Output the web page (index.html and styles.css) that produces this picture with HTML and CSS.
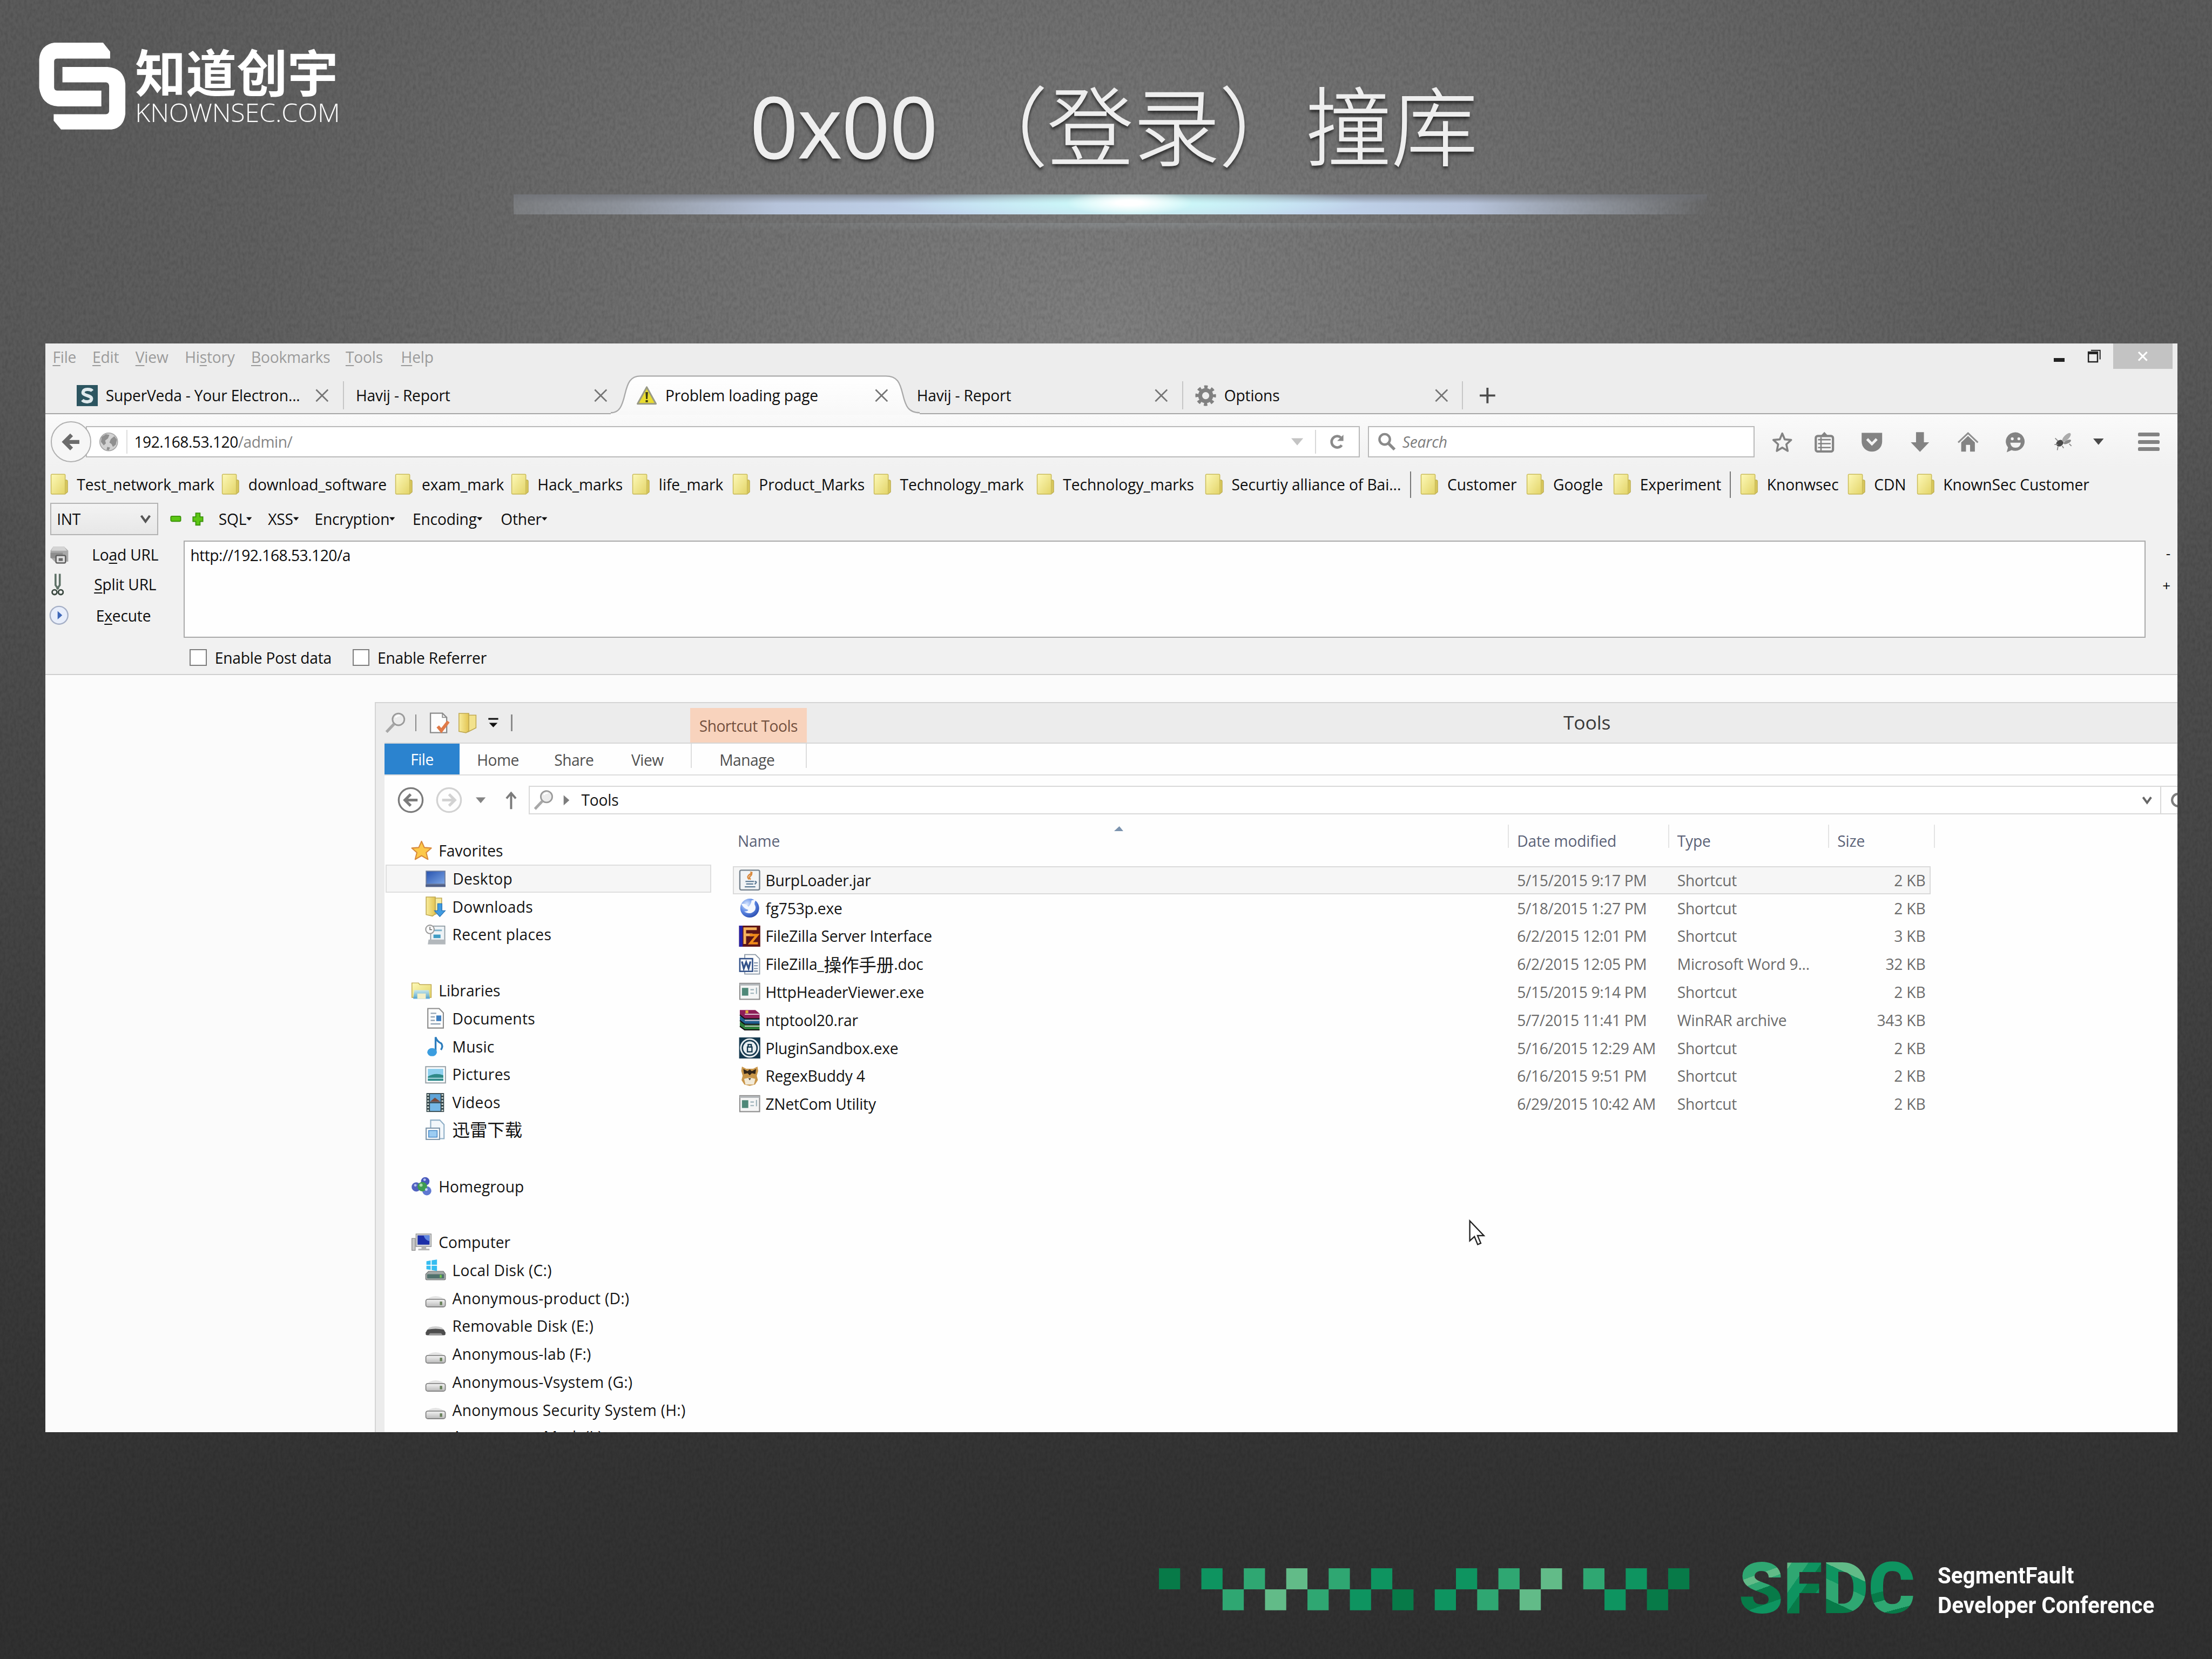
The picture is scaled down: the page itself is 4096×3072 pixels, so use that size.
FILE: index.html
```html
<!DOCTYPE html>
<html lang="zh-CN">
<head>
<meta charset="utf-8">
<title>0x00 （登录）撞库</title>
<link rel="stylesheet" href="styles.css">
</head>
<body>
<svg class="defs" aria-hidden="true">
  <defs>
    <linearGradient id="gFolder" x1="0" y1="0" x2="1" y2="1"><stop offset="0" stop-color="#fdf9b8"/><stop offset="1" stop-color="#e3d468"/></linearGradient>
    <linearGradient id="gFolder2" x1="0" y1="0" x2="1" y2="0"><stop offset="0" stop-color="#f8ec9c"/><stop offset="1" stop-color="#e2c452"/></linearGradient>
    <linearGradient id="gGrey" x1="0" y1="0" x2="0" y2="1"><stop offset="0" stop-color="#f4f4f4"/><stop offset="1" stop-color="#b9b9b9"/></linearGradient>
    <linearGradient id="gBlue" x1="0" y1="0" x2="1" y2="1"><stop offset="0" stop-color="#2a55b0"/><stop offset="1" stop-color="#7aa4e4"/></linearGradient>
    <linearGradient id="gSky" x1="0" y1="0" x2="0" y2="1"><stop offset="0" stop-color="#bfe6fb"/><stop offset="1" stop-color="#3d9bd8"/></linearGradient>
    <linearGradient id="gTab" x1="0" y1="0" x2="0" y2="1"><stop offset="0" stop-color="#ffffff"/><stop offset="1" stop-color="#f8f8f8"/></linearGradient>
    <radialGradient id="gGlobe" cx=".35" cy=".3" r=".8"><stop offset="0" stop-color="#dbe9ff"/><stop offset=".5" stop-color="#5f8be6"/><stop offset="1" stop-color="#2344a8"/></radialGradient>
    <filter id="grain" x="0" y="0" width="100%" height="100%">
      <feTurbulence type="fractalNoise" baseFrequency=".2 .12" numOctaves="2" seed="4"/>
      <feColorMatrix values="0 0 0 0 0  0 0 0 0 0  0 0 0 0 0  .22 0 0 0 -.075"/>
    </filter>
  </defs>
  <symbol id="folder" viewBox="0 0 13 15"><path d="M10 4.500h1.300q1 0 1 1V13l-1.800 1.500z" fill="#d8c75c" stroke="#b5a545" stroke-width=".4"/><rect x=".6" y=".5" width="10" height="14" rx=".6" fill="url(#gFolder)" stroke="#cbbd5c" stroke-width=".6"/></symbol>
  <symbol id="close" viewBox="0 0 10 10"><path d="M.6.6 9.400 9.400M9.400.6.6 9.400" stroke="#757575" stroke-width="1.100" fill="none"/></symbol>
  <symbol id="superveda" viewBox="0 0 15 15"><rect width="15" height="15" fill="#2c5560"/><path d="M11 4.200C10 2.800 5 2.400 4.500 5c-.4 2.800 6 2 6 4.800-.2 2.600-5 2.600-6.500.8" fill="none" stroke="#dfe9ec" stroke-width="2.300"/></symbol>
  <symbol id="warning" viewBox="0 0 15 14"><path d="M7.500 1 14 12.800H1z" fill="#e9dc30" stroke="#999a86" stroke-width="1.200" stroke-linejoin="round"/><path d="M6.600 4.500h1.800L8 9.500H7zM6.700 10.200h1.600v1.500H6.700z" fill="#3c3a12"/></symbol>
  <symbol id="gear" viewBox="0 0 16 16"><circle cx="8" cy="8" r="4.200" fill="none" stroke="#808080" stroke-width="3"/><circle cx="8" cy="8" r="6.600" fill="none" stroke="#808080" stroke-width="2.400" stroke-dasharray="2.600 2.584" stroke-dashoffset="1.300"/></symbol>
  <symbol id="globe" viewBox="0 0 14 14"><circle cx="7" cy="7" r="6.300" fill="#d2d2d2" stroke="#a4a4a4" stroke-width=".6"/><path d="M2 3.500 5 1.500 7.500 2 6.500 4.500 4.500 6 5 8 3.500 9.500 1.500 7zM8.500 5 11 3l1.800 2.500L12 9l-2 1.500L9 8.500 7.500 7.500zM6 10.500l2 .5L7 13l-1.500-.5z" fill="#8f8f8f"/></symbol>
  <symbol id="reload" viewBox="0 0 11 11"><path d="M9 7.800A4 4 0 1 1 8.300 2.300" fill="none" stroke="#8a8a8a" stroke-width="1.800"/><path d="M10.200.4v4.400H5.800z" fill="#8a8a8a"/></symbol>
  <symbol id="lens" viewBox="0 0 13 13"><circle cx="5" cy="4.800" r="3.700" fill="none" stroke="#8a8a8a" stroke-width="1.700"/><path d="M7.600 7.600 12 12" stroke="#8a8a8a" stroke-width="2.100"/></symbol>
  <symbol id="star" viewBox="0 0 16 16"><path d="M8 1.500 9.900 6l4.800.4-3.600 3.300 1 5L8 12.200l-4.100 2.500 1-5L1.300 6.400 6.100 6z" fill="none" stroke="#838383" stroke-width="1.500" stroke-linejoin="round"/></symbol>
  <symbol id="clipboard" viewBox="0 0 14 15"><path d="M4.500 3 7 .3 9.500 3z" fill="#838383"/><rect x=".9" y="3.200" width="12.200" height="11" rx="1.400" fill="none" stroke="#838383" stroke-width="1.600"/><path d="M2.500 5.800h9M2.500 8.600h9M2.500 11.400h9M4.600 4v10" stroke="#838383" stroke-width="1"/></symbol>
  <symbol id="pocket" viewBox="0 0 16 15"><path d="M.5.700h15v6.500a7.500 7.300 0 0 1-15 0z" fill="#838383"/><path d="m4.500 5.300 3.500 3.600 3.500-3.600" fill="none" stroke="#f4f4f4" stroke-width="1.900"/></symbol>
  <symbol id="down" viewBox="0 0 14 15"><path d="M4.200.5h5.600v7.200h3.700L7 14.500.5 7.700h3.700z" fill="#838383"/></symbol>
  <symbol id="home" viewBox="0 0 16 15"><path d="M.8 7.800 8 1l7.200 6.800" fill="none" stroke="#8f8f8f" stroke-width="1.200"/><path d="M3 7.800 8 3l5 4.800v6.700H9.500v-5h-3v5H3z" fill="#838383"/></symbol>
  <symbol id="smile" viewBox="0 0 16 16"><path d="M8 .6a7.200 7 0 1 1-3 13.500L1.300 15.700l1-3.600A7.200 7 0 0 1 8 .6z" fill="#838383"/><path d="M4 8.500h8q-.5 3.800-4 3.800t-4-3.800z" fill="#f4f4f4"/><circle cx="5.500" cy="5.500" r="1.100" fill="#f4f4f4"/><circle cx="10.500" cy="5.500" r="1.100" fill="#f4f4f4"/></symbol>
  <symbol id="bug" viewBox="0 0 14 13"><ellipse cx="4.300" cy="7.500" rx="2.700" ry="2.200" transform="rotate(-35 4.300 7.500)" fill="#4a4a4a"/><ellipse cx="9" cy="3.400" rx="4" ry="1.700" transform="rotate(-45 9 3.400)" fill="#ababab"/><ellipse cx="9.600" cy="6.600" rx="2.900" ry="1.200" transform="rotate(-25 9.600 6.600)" fill="#8a8a8a"/><path d="M1 4l2 2M3 10l-.5 2.500M6 9.500l1 1.500M.5 8.500H3M11 8l1.500 1.500" stroke="#888" stroke-width=".7"/></symbol>
  <symbol id="tri" viewBox="0 0 10 6"><path d="M0 0h10L5 6z" fill="currentColor"/></symbol>
  <symbol id="chev" viewBox="0 0 10 8"><path d="M1.200 1 5 6.200 8.800 1" fill="none" stroke="currentColor" stroke-width="2"/></symbol>
  <symbol id="printer" viewBox="0 0 15 14"><path d="M3 1h8l3 3v8H4L1 9V4z" fill="#a9a9a9"/><path d="M3 1h8l2 3H1.500z" fill="#d4d4d4"/><path d="M1 5.500h9v4H1z" fill="#8d8d8d"/><rect x="5" y="7.500" width="7" height="5.500" rx="1" fill="#dedede" stroke="#606060" stroke-width="1"/><rect x="7" y="9.500" width="3" height="2" fill="#666"/></symbol>
  <symbol id="scissors" viewBox="0 0 9 17"><path d="M3 1v8l2 3M6 1v8l-2 3" fill="none" stroke="#5f7268" stroke-width="1.400"/><circle cx="2.300" cy="14" r="1.700" fill="none" stroke="#3c4a42" stroke-width="1.100"/><circle cx="6.700" cy="14" r="1.700" fill="none" stroke="#3c4a42" stroke-width="1.100"/></symbol>
  <symbol id="play" viewBox="0 0 14 14"><circle cx="7" cy="7" r="6.300" fill="#e8eefb" stroke="#a5afc6" stroke-width=".9"/><path d="M6 4l3.300 3L6 10z" fill="#3f68b8"/></symbol>
  <symbol id="wand" viewBox="0 0 15 15"><circle cx="9.500" cy="5" r="4.200" fill="#ececec" stroke="#9a9a9a" stroke-width="1.100"/><path d="M6.500 8.200 1 14" stroke="#a8a8a8" stroke-width="2"/><path d="M7.500 3.700q1-1.700 3-1.200" stroke="#fff" fill="none"/></symbol>
  <symbol id="props" viewBox="0 0 15 15"><path d="M.8.6h8.500l3 3v10.800H.8z" fill="#fdfdfd" stroke="#8a8a8a" stroke-width=".9"/><path d="M9.300.6v3h3" fill="none" stroke="#8a8a8a" stroke-width=".7"/><path d="m6 10 2.500 3 5-6.500" fill="none" stroke="#e07a48" stroke-width="2.300"/></symbol>
  <symbol id="newfolder" viewBox="0 0 14 15"><path d="M7 2h5.800v9L7 14z" fill="#f2e28c" stroke="#bfa851" stroke-width=".6"/><path d="M.7.8h7v12.400l-2 1.300-5-1z" fill="url(#gFolder2)" stroke="#bfa851" stroke-width=".6"/></symbol>
  <symbol id="qat" viewBox="0 0 8 8"><path d="M.5 1.200h7" stroke="#111" stroke-width="1.200"/><path d="M1 4h6L4 7.200z" fill="#111"/></symbol>
  <symbol id="back" viewBox="0 0 20 20"><circle cx="10" cy="10" r="8.700" fill="none" stroke="currentColor" stroke-width="1.300"/><path d="M15 10H6.200M10 5.800 5.800 10l4.200 4.200" fill="none" stroke="currentColor" stroke-width="2"/></symbol>
  <symbol id="up" viewBox="0 0 9 15"><path d="M4.500 14.500V2M.8 6 4.500 1.700 8.200 6" fill="none" stroke="#7b7b7b" stroke-width="1.700"/></symbol>
  <symbol id="fav" viewBox="0 0 15 14"><path d="M7.500.6 9.500 5l4.900.4-3.600 3.200 1.200 4.800-4.500-2.600L3 13.400l1.200-4.800L.6 5.400 5.500 5z" fill="#fcc84a" stroke="#d8893b" stroke-width=".8" stroke-linejoin="round"/></symbol>
  <symbol id="desktop" viewBox="0 0 15 15"><rect x=".5" y="2" width="14" height="11.500" fill="#6b7c9e"/><rect x="1.200" y="2.700" width="12.600" height="8.500" fill="url(#gBlue)"/><rect x=".5" y="11.800" width="14" height="1.700" fill="#4f5f86"/></symbol>
  <symbol id="downloads" viewBox="0 0 15 15"><path d="M.8.800h6.500v12l-2 1.500-4.500-1z" fill="url(#gFolder2)" stroke="#bfa851" stroke-width=".6"/><path d="M7.300 1.500h4.500v10l-4.500 1.500z" fill="#f5eba0" stroke="#bfa851" stroke-width=".6"/><path d="M9 5.500h3v5h2.300l-3.800 4.200-3.800-4.200H9z" fill="#3f9be0" stroke="#2a74b6" stroke-width=".5"/></symbol>
  <symbol id="recent" viewBox="0 0 15 15"><path d="M4 1.500h10v10H4z" fill="#eef3f6" stroke="#8e9aa2" stroke-width=".7"/><path d="M2.500 11h12v3.500H2z" fill="#b3b8bc"/><rect x="6" y="7.500" width="5" height="2.500" fill="#3f9cc4"/><path d="M6 4.500h6" stroke="#7fb4cc" stroke-width="1.200"/><circle cx="3.500" cy="3.800" r="3" fill="#fafafa" stroke="#9a9a9a" stroke-width=".8"/><path d="M3.500 2v2h1.500" stroke="#666" stroke-width=".6" fill="none"/></symbol>
  <symbol id="libraries" viewBox="0 0 16 14"><path d="M.7 1.500h5l1 1.300h8.600v9.700H.7z" fill="url(#gFolder)" stroke="#c0a94e" stroke-width=".6"/><path d="M2.500 7h11l.8 6.500H1.700z" fill="url(#gSky)" opacity=".85"/><rect x="4.800" y="9.500" width="6.400" height="4" fill="#f4f0c8"/></symbol>
  <symbol id="documents" viewBox="0 0 15 15"><path d="M2 .6h8l3 3v10.800H2z" fill="#fdfdfd" stroke="#8b8b8b" stroke-width=".8"/><path d="M4 4h4M4 6.500h3M4 9h3M4 11.500h7" stroke="#93a4b5" stroke-width=".9"/><rect x="8" y="5.500" width="3.500" height="4" fill="#3f7fc0"/></symbol>
  <symbol id="music" viewBox="0 0 15 15"><path d="M7.500 11.500V1q1 3.200 4 4.400 1.500 2-.2 4.600" fill="none" stroke="#2d7dbd" stroke-width="1.300"/><ellipse cx="5" cy="11.600" rx="3.400" ry="2.900" fill="#3b9ddf"/></symbol>
  <symbol id="pictures" viewBox="0 0 15 15"><rect x=".5" y="2" width="14" height="11.500" fill="#fff" stroke="#9aa4aa" stroke-width=".8"/><rect x="2" y="3.500" width="11" height="8.500" fill="#8fd0ee"/><path d="M2 9q5-3 11-1v4H2z" fill="#2f8a88"/><path d="M2 10.200h11" stroke="#bfe6ec" stroke-width=".6"/></symbol>
  <symbol id="videos" viewBox="0 0 15 15"><rect x="1" y=".8" width="12.500" height="13.400" fill="#35464a"/><rect x="3.500" y="1.500" width="7.500" height="5.700" fill="#5fa4d8"/><rect x="3.500" y="8" width="7.500" height="5.500" fill="#76b8e6"/><path d="M3.500 7 7 4l4 3z" fill="#7a4a3a"/><path d="M2.200 1.500v12.500M12.300 1.500v12.500" stroke="#d6e2dd" stroke-width="1.200" stroke-dasharray="1.100 1.100"/></symbol>
  <symbol id="thunder" viewBox="0 0 15 15"><path d="M4 .8h6.500L13.500 4v10H4z" fill="#f2f7fb" stroke="#8eaec6" stroke-width=".8"/><rect x=".8" y="6.500" width="9.500" height="8" fill="#fff" stroke="#7c95aa" stroke-width=".8"/><rect x="2.600" y="8.200" width="6" height="4.700" fill="#9cccf2" stroke="#4b8cc8" stroke-width=".6"/></symbol>
  <symbol id="homegroup" viewBox="0 0 16 15"><circle cx="4" cy="8" r="3.500" fill="#5263c0"/><circle cx="10.800" cy="3.800" r="3.200" fill="#4758bb"/><circle cx="12" cy="11" r="3.400" fill="#5f78d2"/><circle cx="8.600" cy="7.800" r="3.600" fill="#3f9c52"/><circle cx="7.600" cy="6.600" r="1.200" fill="#a9dcae"/><circle cx="10.300" cy="2.600" r="1" fill="#b6c1f2"/><circle cx="3.300" cy="6.800" r="1" fill="#b6c1f2"/><circle cx="11.600" cy="10" r="1" fill="#c8d4fa"/></symbol>
  <symbol id="computer" viewBox="0 0 16 14"><rect x=".7" y="4" width="2.500" height="9" fill="#c9c9c9" stroke="#8a8a8a" stroke-width=".5"/><rect x="3.800" y=".6" width="11.500" height="9.600" fill="#cfd1d3" stroke="#909090" stroke-width=".5"/><rect x="5" y="1.700" width="9" height="7" fill="#1c2fa8"/><path d="M9.500 1.700H14V6q-3 0-4.500-4.300z" fill="#5f86e0"/><path d="M8 10.200h3.500v1.600h2.500V13H5.500v-1.200H8z" fill="#b4b4b4"/></symbol>
  <symbol id="cdisk" viewBox="0 0 15 15"><path d="M1 1.300 4 .8v3H1zM4.700.7 8.500.1v3.700H4.700zM1 4.500h3v3L1 7zM4.700 4.500h3.800v3.700l-3.800-.6z" fill="#36bdf0"/><path d="M2.500 8.500h10.500l1.500 2v3.200q0 .8-.8.8H1.300q-.8 0-.8-.8V10.500z" fill="#a2a7a6" stroke="#75797a" stroke-width=".5"/><rect x="1.500" y="10.500" width="12" height="3" rx=".5" fill="#50706c"/><rect x="10.500" y="11" width="1.300" height="2" fill="#6fca48"/></symbol>
  <symbol id="disk" viewBox="0 0 15 15"><path d="M3 7.200q4.500-2.200 9 0l2 2.300H1z" fill="#e4e4e4"/><rect x=".6" y="8.400" width="13.800" height="5.400" rx="1.400" fill="url(#gGrey)" stroke="#858585" stroke-width=".7"/><rect x="10.500" y="10" width="1.700" height="2.500" fill="#68805a"/></symbol>
  <symbol id="rdisk" viewBox="0 0 15 15"><path d="M3 8.500q4.500-1.700 9 0l2.300 2.500H.7z" fill="#cfcfcf"/><path d="M1.800 10q5.700-1.200 11.400 0l1.300 2v1.200q0 .8-1 .8H1.500q-1 0-1-.8V12z" fill="#4d4d4d"/><path d="M3.500 12.500h8l1 1.500h-10z" fill="#999"/></symbol>
  <symbol id="jar" viewBox="0 0 15 15"><rect x=".5" y=".5" width="14" height="14" rx="1" fill="#f1f4f6" stroke="#74818c" stroke-width=".9"/><path d="M7 7q-2-2 .5-3.500T8.500 2q1 1.500-.5 2.700T8.200 7" fill="none" stroke="#d98a3e" stroke-width="1"/><path d="M4.500 8.500h6M5 10.300h5M4 12.300h7.500M11 8.500q2.300.2 0 2" fill="none" stroke="#5f7c96" stroke-width=".9"/></symbol>
  <symbol id="fg" viewBox="0 0 15 15"><circle cx="7.500" cy="7.500" r="6.700" fill="url(#gGlobe)"/><path d="M1.500 4.500Q5 3.800 6.500 6.500 8.500 5 8.800 2l3.500-.8Q10 4 11.500 6q1 3-2.500 4.800-3 1-5.500-1 2.300.2 3-1Q3.500 8 1.500 4.500z" fill="#f4f8ff"/></symbol>
  <symbol id="fz" viewBox="0 0 15 15"><rect width="15" height="15" fill="#5c1518"/><path d="M0 0h2.500v15H0z" fill="#2420a8"/><path d="M4 13V2.200h8.500M4 6.500h5.500" fill="none" stroke="#f6b35e" stroke-width="1.900"/><path d="M7.500 6.700h5.300L8 12.500h5.300" fill="none" stroke="#f08a1a" stroke-width="1.700"/></symbol>
  <symbol id="word" viewBox="0 0 15 15"><path d="M4 .6h7.500l3 3v10.800H4z" fill="#fff" stroke="#8b97a5" stroke-width=".7"/><path d="M10.500 6.500h2.800M10.500 8.500h2.800M10.500 10.500h2.800M10.500 12.300h2.800" stroke="#7d8fa6" stroke-width=".8"/><rect x=".5" y="3.500" width="9" height="9" fill="#fff" stroke="#34538a" stroke-width="1"/><path d="m2 5.500 1.300 5L5 6l1.700 4.500L8 5.500" fill="none" stroke="#34538a" stroke-width="1.300"/></symbol>
  <symbol id="exe" viewBox="0 0 15 15"><rect x=".5" y="1.500" width="14" height="11.300" fill="#f5f5f5" stroke="#8c8c8c" stroke-width=".8"/><path d="M.5 2.400h14" stroke="#b5b9bc" stroke-width="1.400"/><rect x="2" y="4.700" width="4.500" height="5.500" fill="#4f8878"/><path d="M8 6h2.500M8 8.500h2.500M12.300 4.500v4.500" stroke="#9ab0b8" stroke-width=".8"/></symbol>
  <symbol id="rar" viewBox="0 0 15 15"><path d="M.5.500h11L14.500 3v3.500H4L.5 4z" fill="#8d1d58"/><path d="M.5 5h2L4 7h10.500v3.300H4L.5 8z" fill="#1f5f8e"/><path d="M.5 9h2L4 11h10.500v3.500H4L.5 12z" fill="#2d7f3a"/><path d="M4 3.500h10.500M4 7.900h10.500M4 12h10.500" stroke="#e6d6de" stroke-width=".6"/><path d="M.5 4 4 6.700h10.500M.5 8 4 10.600h10.500M.5 12 4 14.600h10.500" fill="none" stroke="#111" stroke-width=".8"/><path d="M4.500.8h2v2h-2z" fill="#e3b03a"/></symbol>
  <symbol id="plugin" viewBox="0 0 15 15"><rect width="15" height="15" fill="#16394f"/><circle cx="7.500" cy="7.500" r="6.300" fill="none" stroke="#e9eff2" stroke-width="1.100"/><circle cx="7.500" cy="7.500" r="4.700" fill="#e9eff2"/><rect x="5.900" y="6.800" width="3.200" height="3.400" fill="none" stroke="#16394f" stroke-width=".9"/><path d="M6.400 6.500V5h2.200v1.500" stroke="#16394f" stroke-width=".9" fill="none"/></symbol>
  <symbol id="tiger" viewBox="0 0 15 15"><path d="M2 .8l3 1.500h5L13 .8l.5 3-1 3.500.8 3-2 3.200-3.800 1-3.800-1-2-3.200.8-3L1.500 3.800z" fill="#c9964a"/><path d="M3 2.500l3 1.500 1.500-1.200L9 4l3-1.500-.5 3.500-2.500-.5L7.500 7 6 5.500 3.500 6z" fill="#33261a"/><path d="M3.500 9.500l4-1 4 1-1 4h-6z" fill="#f2ead8"/><path d="M6.500 9h2l-1 1.500z" fill="#54402c"/></symbol>
</svg>

<main class="slide">
  <svg class="texture" aria-hidden="true"><rect width="100%" height="100%" filter="url(#grain)"/></svg>

  <header class="top">
    <div class="brand">
      <svg class="brand-mark" viewBox="0 0 61.500 61.500"><path d="M11 0h34.500l5 6.300v5H12.800q-2 .2-2 2V32q.2 2 2.500 2h31v11.200H13.500Q2 44.500.2 32V12Q1 1.500 11 0z" fill="#fff"/><path d="M16.700 17.200h32Q60 18 61.300 29v21.500Q60 60.500 51.500 61.500H15.700L10.500 55.300v-4.600h37q2-.2 2.300-2V30.500q-.3-2.200-2.300-2.400H16.700z" fill="#fff"/></svg>
      <div class="brand-text"><span class="brand-cn">知道创宇</span><span class="brand-en">KNOWNSEC.COM</span></div>
    </div>
    <div class="title-block">
      <h1><span class="latin">0x00</span><span class="han">（登录）撞库</span></h1>
      <div class="beam"></div>
      <div class="beam-echo"></div>
    </div>
  </header>

  <section class="screen">
    <div class="menubar">
      <span><u>F</u>ile</span><span><u>E</u>dit</span><span><u>V</u>iew</span><span>Hi<u>s</u>tory</span><span><u>B</u>ookmarks</span><span><u>T</u>ools</span><span><u>H</u>elp</span>
      <div class="winbtns">
        <i class="min"></i>
        <svg class="restore" viewBox="0 0 10 10"><path d="M2.500.7h6.800v6.800" fill="none" stroke="#222" stroke-width=".8"/><rect x=".6" y="2" width="6.800" height="7.300" fill="none" stroke="#222" stroke-width="1"/><path d="M.6 2.800h6.800" stroke="#222" stroke-width="1.600"/></svg>
        <b class="winclose"><svg viewBox="0 0 10 10"><path d="M1 1l8 8M9 1 1 9" stroke="#fff" stroke-width="1.600"/></svg></b>
      </div>
    </div>
    <div class="tabs">
      <div class="tab first"><svg class="i"><use href="#superveda"/></svg><span>SuperVeda - Your Electron...</span><svg class="x"><use href="#close"/></svg></div>
      <div class="tab plain"><span>Havij - Report</span><svg class="x"><use href="#close"/></svg></div>
      <div class="tab active"><svg class="tab-shape" viewBox="0 0 220 28"><path d="M0 26.500C6 26.500 8 22 10 13.500S14 .5 21 .5H195C203 .5 205 5 207 13.500S211 26.500 219 26.500V28H0z" fill="url(#gTab)"/><path d="M0 26.500C6 26.500 8 22 10 13.500S14 .5 21 .5H195C203 .5 205 5 207 13.500S211 26.500 219 26.500" fill="none" stroke="#a9a9a9" stroke-width=".9"/></svg><svg class="i"><use href="#warning"/></svg><span>Problem loading page</span><svg class="x"><use href="#close"/></svg></div>
      <div class="tab plain sep"><span>Havij - Report</span><svg class="x"><use href="#close"/></svg></div>
      <div class="tab sep"><svg class="i"><use href="#gear"/></svg><span>Options</span><svg class="x"><use href="#close"/></svg></div>
      <div class="tab new"><svg viewBox="0 0 11 11"><path d="M5.500 0v11M0 5.500h11" stroke="#4c4c4c" stroke-width="1.500"/></svg></div>
    </div>
    <div class="navbar">
      <div class="urlwrap">
        <div class="backbtn"><svg viewBox="0 0 14 14"><path d="M13 7H3M7.500 2 2.500 7l5 5" fill="none" stroke="#6b6b6b" stroke-width="2.800"/></svg></div>
        <div class="urlbar"><svg class="globe"><use href="#globe"/></svg><span class="url">192.168.53.120<em>/admin/</em></span><svg class="drop"><use href="#tri"/></svg><span class="reload"><svg><use href="#reload"/></svg></span></div>
      </div>
      <div class="search"><svg><use href="#lens"/></svg><span>Search</span></div>
      <div class="tools">
        <svg><use href="#star"/></svg><svg><use href="#clipboard"/></svg><svg><use href="#pocket"/></svg><svg><use href="#down"/></svg><svg><use href="#home"/></svg><svg><use href="#smile"/></svg><svg class="bug"><use href="#bug"/></svg><svg class="tiny"><use href="#tri"/></svg><span class="burger"><i></i><i></i><i></i></span>
      </div>
    </div>
    <div class="bookmarks">
      <a><svg><use href="#folder"/></svg>Test_network_mark</a><a><svg><use href="#folder"/></svg>download_software</a><a><svg><use href="#folder"/></svg>exam_mark</a><a><svg><use href="#folder"/></svg>Hack_marks</a><a><svg><use href="#folder"/></svg>life_mark</a><a><svg><use href="#folder"/></svg>Product_Marks</a><a><svg><use href="#folder"/></svg>Technology_mark</a><a><svg><use href="#folder"/></svg>Technology_marks</a><a><svg><use href="#folder"/></svg>Securtiy alliance of Bai...</a><a class="bar"><svg><use href="#folder"/></svg>Customer</a><a><svg><use href="#folder"/></svg>Google</a><a><svg><use href="#folder"/></svg>Experiment</a><a class="bar"><svg><use href="#folder"/></svg>Knonwsec</a><a><svg><use href="#folder"/></svg>CDN</a><a><svg><use href="#folder"/></svg>KnownSec Customer</a>
    </div>
    <div class="hackbar">
      <div class="select"><span>INT</span><svg><use href="#chev"/></svg></div>
      <svg class="minus" viewBox="0 0 8 10"><rect x=".5" y="3" width="7" height="3.600" rx=".8" fill="#5cc614" stroke="#3a9208" stroke-width=".7"/></svg>
      <svg class="plus" viewBox="0 0 8 10"><path d="M2.500.8h3v2.700h2v3.200h-2v2.600h-3V6.700h-2V3.500h2z" fill="#5cc614" stroke="#3a9208" stroke-width=".7"/></svg>
      <span>SQL<svg><use href="#tri"/></svg></span><span>XSS<svg><use href="#tri"/></svg></span><span>Encryption<svg><use href="#tri"/></svg></span><span>Encoding<svg><use href="#tri"/></svg></span><span>Other<svg><use href="#tri"/></svg></span>
    </div>
    <div class="hackbody">
      <div class="actions">
        <div><svg class="a1"><use href="#printer"/></svg><span>Lo<u>a</u>d URL</span></div>
        <div><svg class="a2"><use href="#scissors"/></svg><span><u>S</u>plit URL</span></div>
        <div><svg class="a3"><use href="#play"/></svg><span>E<u>x</u>ecute</span></div>
      </div>
      <div class="textarea">http://192.168.53.120/a</div>
      <div class="sizers"><span>-</span><span>+</span></div>
    </div>
    <div class="checks"><i></i><span>Enable Post data</span><i></i><span>Enable Referrer</span></div>

    <div class="page">
      <div class="explorer">
        <div class="etitle">
          <div class="qat"><svg class="q1"><use href="#wand"/></svg><svg class="q2"><use href="#props"/></svg><svg class="q3"><use href="#newfolder"/></svg><svg class="q4"><use href="#qat"/></svg></div>
          <div class="ctx">Shortcut Tools</div>
          <div class="wintitle">Tools</div>
        </div>
        <div class="inner">
          <div class="ribbon"><b>File</b><span>Home</span><span>Share</span><span>View</span><span class="manage">Manage</span></div>
          <div class="address">
            <svg class="circ"><use href="#back"/></svg><svg class="circ fwd"><use href="#back"/></svg><svg class="hist"><use href="#tri"/></svg><svg class="up"><use href="#up"/></svg>
            <div class="path"><svg class="w"><use href="#wand"/></svg><svg class="r" viewBox="0 0 5 8"><path d="M.3 0v8L4.800 4z" fill="#7d7d7d"/></svg><span>Tools</span><svg class="c"><use href="#chev"/></svg></div>
            <div class="refresh"><svg viewBox="0 0 11 11"><path d="M9 7.800A4 4 0 1 1 8.300 2.300" fill="none" stroke="#7e7e7e" stroke-width="1.500"/></svg></div>
          </div>
          <div class="content">
            <nav class="tree">
              <div class="g"><svg><use href="#fav"/></svg>Favorites</div>
              <div class="sel"><svg><use href="#desktop"/></svg>Desktop</div>
              <div><svg><use href="#downloads"/></svg>Downloads</div>
              <div><svg><use href="#recent"/></svg>Recent places</div>
              <div class="g"><svg><use href="#libraries"/></svg>Libraries</div>
              <div><svg><use href="#documents"/></svg>Documents</div>
              <div><svg><use href="#music"/></svg>Music</div>
              <div><svg><use href="#pictures"/></svg>Pictures</div>
              <div><svg><use href="#videos"/></svg>Videos</div>
              <div class="cn"><svg><use href="#thunder"/></svg>迅雷下载</div>
              <div class="g"><svg><use href="#homegroup"/></svg>Homegroup</div>
              <div class="g"><svg><use href="#computer"/></svg>Computer</div>
              <div><svg><use href="#cdisk"/></svg>Local Disk (C:)</div>
              <div><svg><use href="#disk"/></svg>Anonymous-product (D:)</div>
              <div><svg><use href="#rdisk"/></svg>Removable Disk (E:)</div>
              <div><svg><use href="#disk"/></svg>Anonymous-lab (F:)</div>
              <div><svg><use href="#disk"/></svg>Anonymous-Vsystem (G:)</div>
              <div><svg><use href="#disk"/></svg>Anonymous Security System (H:)</div>
              <div class="last"><svg><use href="#disk"/></svg>Anonymous-Mark (I:)</div>
            </nav>
            <div class="files">
              <div class="fhead"><span>Name<svg viewBox="0 0 7 4"><path d="M0 4h7L4 .3z" fill="#7b93ae"/></svg></span><span>Date modified</span><span>Type</span><span>Size</span></div>
              <div class="row on"><span><svg><use href="#jar"/></svg>BurpLoader.jar</span><span>5/15/2015 9:17 PM</span><span>Shortcut</span><span>2 KB</span></div>
              <div class="row"><span><svg><use href="#fg"/></svg>fg753p.exe</span><span>5/18/2015 1:27 PM</span><span>Shortcut</span><span>2 KB</span></div>
              <div class="row"><span><svg><use href="#fz"/></svg>FileZilla Server Interface</span><span>6/2/2015 12:01 PM</span><span>Shortcut</span><span>3 KB</span></div>
              <div class="row"><span><svg><use href="#word"/></svg>FileZilla_<em class="hz">操作手册</em>.doc</span><span>6/2/2015 12:05 PM</span><span>Microsoft Word 9...</span><span>32 KB</span></div>
              <div class="row"><span><svg><use href="#exe"/></svg>HttpHeaderViewer.exe</span><span>5/15/2015 9:14 PM</span><span>Shortcut</span><span>2 KB</span></div>
              <div class="row"><span><svg><use href="#rar"/></svg>ntptool20.rar</span><span>5/7/2015 11:41 PM</span><span>WinRAR archive</span><span>343 KB</span></div>
              <div class="row"><span><svg><use href="#plugin"/></svg>PluginSandbox.exe</span><span>5/16/2015 12:29 AM</span><span>Shortcut</span><span>2 KB</span></div>
              <div class="row"><span><svg><use href="#tiger"/></svg>RegexBuddy 4</span><span>6/16/2015 9:51 PM</span><span>Shortcut</span><span>2 KB</span></div>
              <div class="row"><span><svg><use href="#exe"/></svg>ZNetCom Utility</span><span>6/29/2015 10:42 AM</span><span>Shortcut</span><span>2 KB</span></div>
            </div>
          </div>
        </div>
      </div>
    </div>
    <svg class="cursor" viewBox="0 0 12 19"><path d="M1 1v14.200l3.300-3 2.300 5.600 2.200-.9L6.500 11.500H11z" fill="#fff" stroke="#222" stroke-width=".9"/></svg>
  </section>

  <footer class="foot">
    <svg class="squares" viewBox="0 0 25 2" preserveAspectRatio="none">
      <path fill="#077a48" d="M0 0h1v1H0zM24 0h1v1h-1zM11 1h1v1h-1zM23 1h1v1h-1z"/>
      <path fill="#0e9460" d="M2 0h1v1H2zM10 0h1v1h-1zM14 0h1v1h-1zM22 0h1v1h-1zM9 1h1v1H9zM13 1h1v1h-1zM21 1h1v1h-1z"/>
      <path fill="#2fa772" d="M4 0h1v1H4zM8 0h1v1H8zM16 0h1v1h-1zM20 0h1v1h-1zM3 1h1v1H3zM7 1h1v1H7zM15 1h1v1h-1z"/>
      <path fill="#62bb88" d="M6 0h1v1H6zM18 0h1v1h-1zM5 1h1v1H5zM17 1h1v1h-1z"/>
    </svg>
    <div class="sfdc">SFDC</div>
    <div class="conf"><span>SegmentFault</span><span>Developer Conference</span></div>
  </footer>
</main>
</body>
</html>
```
FILE: styles.css
```css
/* the slide is 156.8rem wide and 117.6rem tall */
html { font-size: 26.1224px; }
* { box-sizing: border-box; }
body { margin: 0; overflow: hidden; font-family: "Open Sans", "Noto Sans", "Noto Sans CJK SC", sans-serif; }
svg { display: block; flex: none; overflow: visible; }
i, em { font-style: normal; }
u { text-underline-offset: .13em; text-decoration-thickness: .07em; }
.defs { position: absolute; width: 0; height: 0; }

.slide {
  position: relative; width: 156.8rem; height: 117.6rem; overflow: hidden;
  background:
    radial-gradient(ellipse 52% 46% at 50% 20%, rgba(255,255,255,.23), rgba(255,255,255,.13) 40%, rgba(255,255,255,.04) 75%, transparent),
    linear-gradient(#5b5b5b, #595959 20%, #4c4c4c 42%, #3f3f3f 65%, #343434 88%, #303030);
}
.texture { position: absolute; inset: 0; width: 100%; height: 100%; }

.top { position: relative; display: flex; height: 24.33rem; }
.brand { display: flex; width: 36.4rem; padding: 3.04rem 0 0 2.75rem; gap: .68rem; }
.brand-mark { width: 6.15rem; height: 6.15rem; }
.brand-text { display: flex; flex-direction: column; color: #fff; white-space: nowrap; }
.brand-cn { font: 700 3.6rem/4rem "Noto Sans CJK SC", sans-serif; margin-top: -.05rem; }
.brand-en { font-size: 1.85rem; font-weight: 300; line-height: 1.9rem; letter-spacing: -.005rem; }
.title-block { width: 84.6rem; padding-top: 4.8rem; }
h1 { display: flex; margin: 0 0 .78rem; padding-left: 16.75rem; height: 8.2rem; line-height: 8.2rem; font-size: 6rem; font-weight: 400; color: #eee; text-shadow: 0 .2rem .25rem rgba(0,0,0,.7); white-space: nowrap; }
.latin { width: 15rem; -webkit-text-stroke: .04rem #eee; letter-spacing: -.03rem; }
.han { font-family: "Noto Sans CJK SC", sans-serif; font-weight: 300; font-size: 6.1rem; line-height: 7.75rem; -webkit-text-stroke: .06rem #eee; }
.beam {
  height: 1.4rem;
  background:
    radial-gradient(ellipse 4.500rem .9rem at 51.6% 42%, #fff 20%, rgba(255,255,255,0)),
    radial-gradient(ellipse 17rem 1.100rem at 51.6% 45%, rgba(205,255,252,.95), rgba(205,255,252,0)),
    linear-gradient(rgba(110,112,118,.75), rgba(110,112,118,0) 45%),
    linear-gradient(90deg, rgba(160,165,172,.35), rgba(164,172,186,.6) 9%, #b6c3da 22%, #c2d6ee 38%, #c8e6ee 52%, #c2d6ee 66%, #b6c3da 80%, rgba(164,172,186,.6) 91%, rgba(160,165,172,0));
}
.beam-echo { height: .6rem; margin-top: .63rem; background: linear-gradient(90deg, transparent 8%, rgba(160,170,175,.35) 50%, transparent 92%); -webkit-mask: linear-gradient(#000, transparent); mask: linear-gradient(#000, transparent); }

.screen { position: relative; display: flex; flex-direction: column; width: 151.16rem; height: 77.21rem; margin-left: 3.2rem; overflow: hidden; background: #ededed; color: #0e0e0e; font-size: 1.08rem; white-space: nowrap; letter-spacing: -.008rem; }

.menubar { display: grid; grid-template-columns: 2.82rem 3.05rem 3.5rem 4.7rem 6.7rem 3.93rem 1fr auto; height: 2rem; padding-left: .53rem; line-height: 1.92rem; color: #9b9b9b; }
.winbtns { display: flex; align-items: flex-start; }
.min { width: .75rem; height: .25rem; margin: 1.07rem 1.6rem 0 0; background: #222; }
.restore { width: 1rem; height: .95rem; margin: .45rem .85rem 0 0; }
.winclose { display: grid; place-items: center; width: 4.200rem; height: 1.83rem; margin-right: .36rem; background: #c3c3c3; }
.winclose svg { width: .75rem; height: .75rem; }

.tabs { display: grid; grid-template-columns: 21.17rem 19.73rem 20.03rem 19.73rem 19.84rem 1fr; height: 3.05rem; padding-top: .4rem; border-bottom: .1rem solid #a6a6a6; }
.tab { position: relative; display: flex; align-items: center; padding-left: .86rem; padding-top: .05rem; }
.tab span { flex: 1; }
.tab .i { position: relative; width: 1.5rem; height: 1.5rem; margin-right: .56rem; }
.tab .x { width: 1.02rem; height: .95rem; margin-right: 1.02rem; position: relative; }
.tab.first { padding-left: 2.23rem; }
.first::after, .sep::after { content: ""; position: absolute; right: 0; top: .3rem; width: .08rem; height: 2rem; background: #c6c6c6; }
.tab.active { padding-left: 1rem; }
.active .x { margin-right: 1.15rem; }
.active span { position: relative; }
.tab-shape { position: absolute; left: -.8rem; bottom: -.12rem; width: 22rem; height: 2.8rem; }
.new { padding-left: 1.200rem; }
.new svg { width: 1.100rem; height: 1.100rem; }

.navbar { display: flex; align-items: center; height: 3.75rem; background: linear-gradient(#fafafa, #f1f1f1); padding-top: .13rem; }
.urlwrap { display: flex; align-items: center; width: 93.2rem; padding-left: .38rem; }
.backbtn { position: relative; z-index: 1; display: grid; place-items: center; width: 2.900rem; height: 2.900rem; border: .09rem solid #b0b0b0; border-radius: 50%; background: #f6f6f6; }
.backbtn svg { width: 1.400rem; height: 1.400rem; }
.urlbar { display: flex; align-items: center; flex: 1; height: 2.2rem; margin-left: -.4rem; padding-left: .85rem; border: .09rem solid #b9b9b9; background: #fff; }
.globe { width: 1.400rem; height: 1.400rem; }
.url { flex: 1; margin-left: .55rem; padding-left: .48rem; border-left: .08rem solid #ddd; line-height: 1.7rem; letter-spacing: -.02rem; }
.url em { color: #858585; }
.drop { width: .85rem; height: .7rem; color: #c4c4c4; }
.reload { display: flex; align-items: center; width: 3.1rem; height: 1.7rem; margin-left: .85rem; padding-left: .9rem; border-left: .08rem solid #d8d8d8; }
.reload svg { width: 1.100rem; height: 1.100rem; }
.search { display: flex; align-items: center; width: 27.4rem; height: 2.2rem; margin-left: .58rem; padding-left: .6rem; border: .09rem solid #b9b9b9; background: #fff; color: #7d7d7d; }
.search svg { width: 1.300rem; height: 1.300rem; margin-right: .45rem; }
.search span { font-style: italic; }
.tools { display: grid; grid-template-columns: 2.98rem 3.36rem 3.4rem 3.4rem 3.4rem 3.48rem 2.78rem 3.17rem 1.55rem; align-items: center; margin-left: 1.2rem; height: 100%; }
.tools svg { width: 1.55rem; height: 1.5rem; }
.tools .bug { width: 1.400rem; height: 1.300rem; }
.tools .tiny { width: .75rem; height: .45rem; color: #4a4a4a; }
.burger { display: flex; flex-direction: column; gap: .25rem; }
.burger i { height: .27rem; border-radius: .1rem; background: #838383; }

.bookmarks { display: grid; grid-template-columns: 12.15rem 12.3rem 8.2rem 8.6rem 7.100rem 10rem 11.55rem 11.95rem 15.3rem 7.5rem 6.150rem 9rem 7.600rem 4.900rem 1fr; align-items: center; height: 2.4rem; padding-left: .35rem; background: #f1f1f1; letter-spacing: -.003rem; }
.bookmarks a { position: relative; display: flex; align-items: center; }
.bookmarks svg { width: 1.3rem; height: 1.500rem; margin-right: .6rem; }
.bookmarks .bar::before { content: ""; position: absolute; left: -.75rem; top: -.15rem; width: .09rem; height: 1.850rem; background: #777; }

.hackbar { display: grid; grid-template-columns: 8.500rem 1.58rem 1.87rem 3.5rem 3.3rem 6.95rem 6.250rem 1fr; align-items: center; height: 2.55rem; padding-left: .35rem; background: #f1f1f1; }
.select { display: flex; align-items: center; justify-content: space-between; width: 7.650rem; height: 2.3rem; padding: 0 .4rem; border: .09rem solid #b3b3b3; background: linear-gradient(#f3f3f3, #e7e7e7); }
.select svg { width: .8rem; height: .7rem; color: #555; }
.hackbar > svg { width: .8rem; height: 1rem; }
.hackbar > span { display: flex; align-items: center; }
.hackbar > span svg { width: .4rem; height: .3rem; }

.hackbody { display: flex; height: 7.42rem; padding-top: .25rem; background: #f1f1f1; }
.actions { width: 9.8rem; }
.actions div { display: flex; align-items: center; height: 2.2rem; padding-left: .3rem; }
.actions span { flex: 1; padding-right: 1.4rem; text-align: center; }
.a1 { width: 1.45rem; height: 1.400rem; margin-right: 1.200rem; }
.a2 { width: .9rem; height: 1.700rem; margin: 0 1.600rem 0 .15rem; }
.a3 { width: 1.400rem; height: 1.400rem; margin-right: 1rem; }
.actions div:first-child { height: 2rem; }
.textarea { width: 139.100rem; height: 6.9rem; padding: .25rem .42rem; border: .09rem solid #a9a9a9; background: #fefefe; line-height: 1.4rem; letter-spacing: -.02rem; }
.sizers { display: flex; flex-direction: column; width: 2.2rem; padding-right: .45rem; text-align: right; line-height: 2.2rem; font-size: 1rem; }
.sizers span:first-child { height: 2.1rem; line-height: 1.8rem; }

.checks { display: flex; align-items: center; height: 2.35rem; padding: 0 0 .05rem 10.25rem; border-bottom: .1rem solid #cfcfcf; background: #f1f1f1; }
.checks i { width: 1.2rem; height: 1.2rem; border: .1rem solid #7d7d7d; background: #fff; }
.checks span { width: 9.75rem; margin-left: .58rem; }

.page { flex: 1; padding: 1.93rem 0 0 23.35rem; background: #fbfbfb; overflow: hidden; }
.explorer { height: 60rem; background: #ececec; border: solid #d4d4d4; border-width: .1rem 0 0 .1rem; color: #141414; }
.etitle { display: flex; height: 2.8rem; }
.qat { position: relative; display: flex; align-items: center; width: 22.3rem; padding-left: .65rem; }
.qat svg { position: relative; }
.q1 { width: 1.5rem; height: 1.5rem; margin-right: 1.65rem; }
.q2 { width: 1.5rem; height: 1.5rem; margin-right: .55rem; }
.q3 { width: 1.400rem; height: 1.500rem; margin-right: .7rem; }
.q4 { width: .8rem; height: .8rem; }
.qat::before, .qat::after { content: ""; position: absolute; top: .78rem; left: 2.8rem; width: .09rem; height: 1.200rem; background: #8a8a8a; }
.qat::after { left: 9.6rem; }
.ctx { width: 8.250rem; height: 2.45rem; margin-top: .35rem; background: #f8d3bd; color: #73503e; line-height: 2.55rem; text-align: center; letter-spacing: -.02rem; }
.wintitle { margin-left: 53.65rem; font-size: 1.36rem; line-height: 2.75rem; color: #3a3a3a; }
.inner { height: 100%; margin-left: .64rem; background: #fefefe; border-top: .08rem solid #d6d6d6; }
.ribbon { display: flex; height: 2.24rem; border-bottom: .1rem solid #dcdcdc; color: #505050; line-height: 2.35rem; letter-spacing: -.02rem; }
.ribbon b { width: 5.3rem; margin-right: 1.25rem; background: #2b83cf; color: #fff; font-weight: 500; text-align: center; line-height: 2.25rem; }
.ribbon span { width: 5.47rem; }
.ribbon span:nth-of-type(3) { width: 4.2rem; }
.ribbon .manage { width: 8.25rem; height: 1.7rem; padding-right: .25rem; border: solid #ddd; border-width: 0 .08rem; text-align: center; }
.address { display: flex; align-items: center; height: 3.5rem; padding-left: .87rem; }
.circ { width: 1.950rem; height: 1.950rem; color: #7b7b7b; }
.fwd { margin-left: .78rem; transform: scaleX(-1); color: #d2d2d2; }
.hist { width: .7rem; height: .45rem; margin: 0 1.400rem 0 .9rem; color: #848484; }
.up { width: .8rem; height: 1.45rem; }
.path { display: flex; flex: none; align-items: center; width: 115.7rem; height: 2.05rem; margin-left: .87rem; padding: 0 .55rem 0 .25rem; border: .09rem solid #d9d9d9; background: #fff; line-height: 1.7rem; }
.path .w { width: 1.45rem; height: 1.5rem; }
.path .r { width: .45rem; height: .75rem; margin: 0 .85rem 0 .65rem; }
.path span { flex: 1; }
.path .c { width: .75rem; height: .7rem; color: #666; }
.refresh { display: flex; flex: none; align-items: center; width: 6rem; height: 2.05rem; padding-left: .6rem; border: solid #d9d9d9; border-width: .09rem 0; }
.refresh svg { width: 1.2rem; height: 1.2rem; }

.content { display: flex; }
.tree { width: 24.7rem; padding-top: .83rem; letter-spacing: .01rem; }
.tree div { display: flex; align-items: center; width: 23.1rem; height: 1.983rem; padding-left: 2.85rem; }
.tree svg { width: 1.5rem; height: 1.5rem; margin-right: .45rem; }
.tree .g { padding-left: 1.88rem; margin-top: 1.983rem; letter-spacing: 0; }
.tree .g:first-child { margin-top: 0; }
.tree .sel { padding-left: 2.75rem; margin-left: .05rem; border: .09rem solid #dedede; background: #f6f6f6; }
.tree .cn { font-size: 1.24rem; letter-spacing: 0; line-height: 1.7rem; padding-bottom: .1rem; }
.tree .last { height: 1.75rem; }
.hz { font-size: 1.25rem; }

.fhead, .row { display: grid; grid-template-columns: 54.9rem 11.35rem 11.35rem 1fr; }
.files { width: 85.200rem; }
.fhead { grid-template-columns: 55rem 11.35rem 11.35rem 1fr; height: 2.93rem; color: #5c6378; line-height: 2.35rem; }
.fhead span { position: relative; height: 1.65rem; padding-left: .58rem; border-right: .08rem solid #e4e4e4; }
.fhead span:first-child { padding-left: .33rem; }
.fhead svg { position: absolute; left: 27rem; top: .08rem; width: .65rem; height: .4rem; }
.row { width: 84.9rem; height: 1.983rem; align-items: center; color: #6c6c6c; border: .09rem solid transparent; }
.row.on { border-color: #dadada; background: #f6f6f6; }
.row span { display: flex; align-items: center; padding-left: .6rem; }
.row span:nth-child(2) { letter-spacing: -.014rem; }
.row span:first-child { padding-left: .32rem; color: #141414; }
.row span:last-child { justify-content: flex-end; padding-right: .3rem; }
.row svg { width: 1.55rem; height: 1.5rem; margin-right: .35rem; }
.cursor { position: absolute; left: 100.900rem; top: 62.100rem; width: 1.2rem; height: 1.9rem; }

.foot { position: relative; display: flex; padding: 9.62rem 0 0 82.15rem; }
.squares { width: 37.6rem; height: 2.98rem; }
/* one faceted gradient per letter of the wordmark */
.sfdc {
  width: 14.1rem; height: 4.4rem; margin: -.7rem 0 0 3.5rem;
  font: 900 5.05rem/4.4rem Roboto, sans-serif; color: transparent; white-space: nowrap;
  background:
    linear-gradient(160deg, #2fa772 30%, #62bb88 0 40%, #2fa772 0 50%, #077a48 0 72%, #0e9460 0) 0 0 / 3.05rem 100% no-repeat,
    linear-gradient(125deg, #62bb88 16%, #2fa772 0 36%, #0e9460 0 52%, #077a48 0 70%, #0e9460 0) 3.05rem 0 / 2.85rem 100% no-repeat,
    linear-gradient(205deg, #62bb88 30%, #0e9460 0 48%, #2fa772 0 72%, #077a48 0) 5.9rem 0 / 3.3rem 100% no-repeat,
    linear-gradient(165deg, #0e9460 48%, #077a48 0 60%, #2fa772 0 76%, #077a48 0) 9.2rem 0 / 4rem 100% no-repeat;
  -webkit-background-clip: text; background-clip: text;
}
.conf { display: flex; flex-direction: column; margin-top: -.5rem; color: #fff; font: 700 1.6rem/2.1rem Roboto, sans-serif; white-space: nowrap; transform: scaleX(.965); transform-origin: left; }
```
